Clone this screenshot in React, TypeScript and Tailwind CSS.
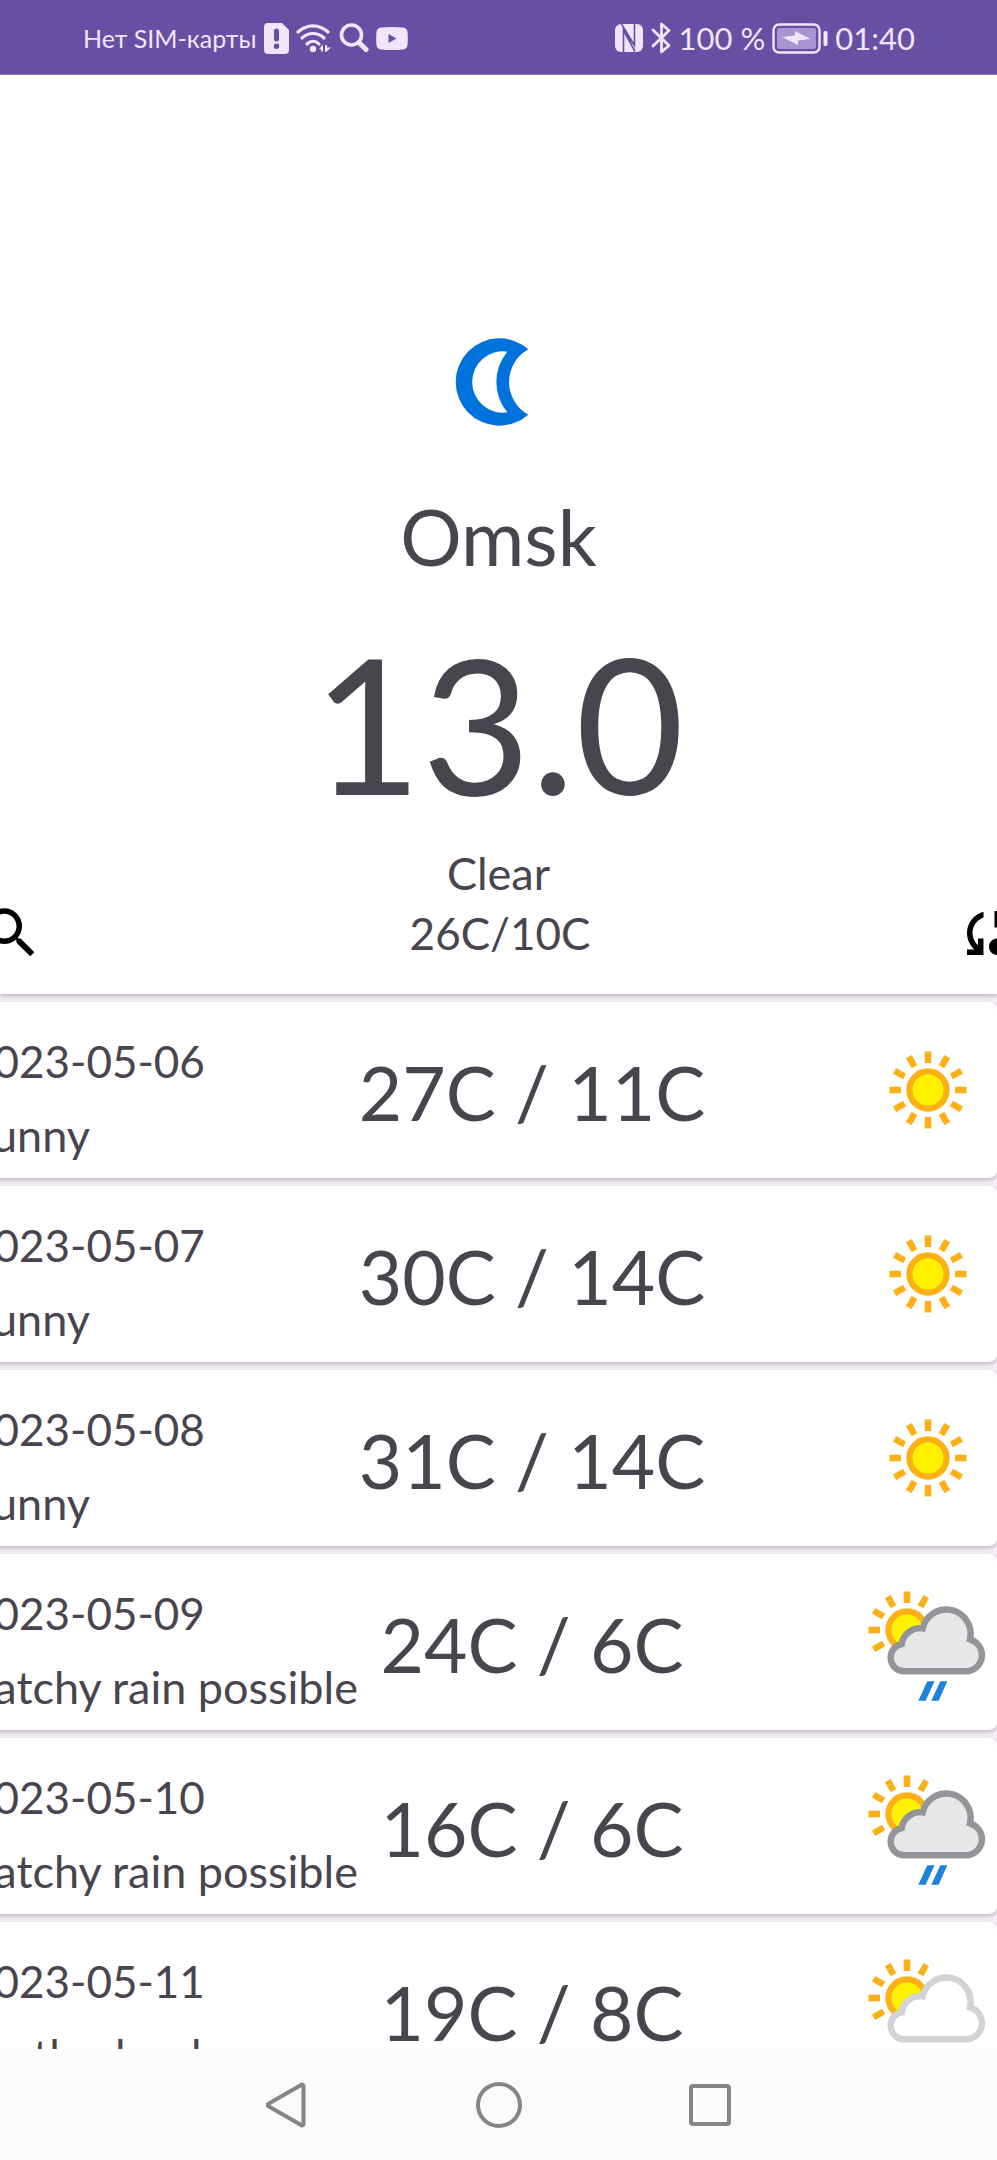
type IconKind = "sunny" | "rain" | "cloudy";

interface Day {
  date: string;
  condition: string;
  temps: string;
  icon: IconKind;
}

const DAYS: Day[] = [
  { date: "2023-05-06", condition: "Sunny", temps: "27C / 11C", icon: "sunny" },
  { date: "2023-05-07", condition: "Sunny", temps: "30C / 14C", icon: "sunny" },
  { date: "2023-05-08", condition: "Sunny", temps: "31C / 14C", icon: "sunny" },
  { date: "2023-05-09", condition: "Patchy rain possible", temps: "24C / 6C", icon: "rain" },
  { date: "2023-05-10", condition: "Patchy rain possible", temps: "16C / 6C", icon: "rain" },
  { date: "2023-05-11", condition: "Partly cloudy", temps: "19C / 8C", icon: "cloudy" },
];

function Sun({ cx, cy, angles }: { cx: number; cy: number; angles: number[] }) {
  return (
    <g>
      {angles.map((a) => (
        <rect key={a} x={cx - 3.3} y={cy - 38.5} width="6.6" height="11.5" fill="#fbb116" transform={`rotate(${a} ${cx} ${cy})`} />
      ))}
      <circle cx={cx} cy={cy} r="18.6" fill="#fff200" stroke="#fbb116" strokeWidth="6.2" />
    </g>
  );
}

function WeatherIcon({ kind }: { kind: IconKind }) {
  if (kind === "sunny") {
    return (
      <svg viewBox="0 0 140 140" className="size-[140px]" role="img" aria-label="Sunny">
        <Sun cx={71} cy={70} angles={[0, 30, 60, 90, 120, 150, 180, 210, 240, 270, 300, 330]} />
      </svg>
    );
  }
  const rain = kind === "rain";
  return (
    <svg viewBox="0 0 140 140" className="size-[140px]" role="img" aria-label={rain ? "Rain" : "Cloudy"}>
      <Sun cx={50} cy={58} angles={[0, 30, 240, 270, 300, 330]} />
      <path
        d="M46.3 99.3A13.8 13.8 0 0 1 44.8 72A18.5 18.5 0 0 1 65.7 56.3A24 24 0 0 1 113 67.3A16.3 16.3 0 0 1 109 99.3Z"
        fill={rain ? "#e6e7e8" : "#ffffff"}
        stroke={rain ? "#939598" : "#d1d3d4"}
        strokeWidth="6.4"
      />
      {rain && <path d="M70.3 109.3h7.2l-8.8 19.4h-7.4zM83.3 109.3h7l-8.6 19.4h-7.4z" fill="#1e82dc" />}
    </svg>
  );
}

function StatusBar() {
  return (
    <header className="flex h-[75px] shrink-0 items-center justify-between border-b border-[#8f80a6] bg-[#674fa3] pt-0.5 pr-[82px] pl-[83px] text-[#efe6fb]">
      <div className="flex items-center gap-[7px]">
        <span className="text-[25px] leading-8 whitespace-nowrap">Нет SIM-карты</span>
        <svg viewBox="0 0 25 31" className="h-[31px] w-[25px]" aria-hidden="true">
          <path fill="currentColor" fillRule="evenodd" d="M4 0h14l7 7v20a4 4 0 0 1-4 4H4a4 4 0 0 1-4-4V4a4 4 0 0 1 4-4zM10 8v8a2.5 2.5 0 0 0 5 0V8a2.5 2.5 0 0 0-5 0zM12.5 20.500a2.700 2.700 0 1 0 0 5.400a2.700 2.700 0 0 0 0-5.400z" />
        </svg>
        <svg viewBox="0 0 36 31" className="h-[31px] w-[36px]" aria-hidden="true">
          <g fill="none" stroke="currentColor" strokeWidth="3.2" strokeLinecap="round">
            <path d="M2 9C11 .8 23 .8 32 9" />
            <path d="M6 15c6.500-6 15.500-6 22 0" />
            <path d="M11 21c3.800-3.600 8.500-3.600 12 0" />
          </g>
          <circle cx="17" cy="26" r="3.200" fill="currentColor" />
          <path fill="currentColor" d="M23 26l4-4.500v7h-2V26zM29 22h2v2.500h4L30 29h-1z" />
        </svg>
        <svg viewBox="0 0 30 30" className="size-[30px]" fill="none" stroke="currentColor" aria-hidden="true">
          <circle cx="12.500" cy="12" r="10" strokeWidth="3.600" />
          <path d="M20 19.500l7 7" strokeWidth="5" strokeLinecap="round" />
        </svg>
        <svg viewBox="0 0 32 23" className="h-[23px] w-[32px]" aria-hidden="true">
          <path fill="currentColor" fillRule="evenodd" d="M5 .6Q16-.6 27 .6q4 .4 4.500 4.500.7 6.400 0 12.800-.5 4.100-4.500 4.500-11 1.200-22 0-4-.4-4.500-4.500-.7-6.400 0-12.800Q1 1 5 .6zM12.500 7v9l8-4.500z" />
        </svg>
      </div>
      <div className="flex items-center gap-[7px]">
        <svg viewBox="0 0 28 28" className="size-[28px]" aria-hidden="true">
          <rect width="28" height="28" rx="6" fill="currentColor" />
          <path d="M8.500 28V6l11 15.500V0M6.500 0l13 21.500M8.500 6.500l11.500 21" fill="none" stroke="#674fa3" strokeWidth="1.600" />
        </svg>
        <svg viewBox="0 0 22 32" className="h-[32px] w-[22px]" fill="none" stroke="currentColor" strokeWidth="2.800" strokeLinejoin="round" strokeLinecap="round" aria-hidden="true">
          <path d="M3 8l16 15.500L11.500 30V2L19 8.500 3 24" />
        </svg>
        <span className="text-[31px] leading-10 whitespace-nowrap">100 %</span>
        <svg viewBox="0 0 56 31" className="h-[31px] w-[56px]" aria-hidden="true">
          <rect x="1.500" y="1.500" width="46" height="28" rx="5.500" fill="none" stroke="currentColor" strokeWidth="2.400" />
          <rect x="5" y="5" width="39" height="21" rx="2.500" fill="#a794d3" />
          <path d="M10 14l13-1.500V8l15.500 8-12.500 1.500V22z" fill="currentColor" />
          <rect x="51.500" y="8" width="4" height="15" rx="1.500" fill="currentColor" />
        </svg>
        <span className="text-[31px] leading-10 whitespace-nowrap">01:40</span>
      </div>
    </header>
  );
}

function CurrentWeather() {
  return (
    <section className="relative z-10 flex shrink-0 flex-col items-center bg-white pt-[259px] pb-7 shadow-[0_2px_4px_rgba(30,20,30,0.25)]">
      <svg viewBox="151 72 288 288" className="size-[96px]" role="img" aria-label="Clear night">
        <path
          fill="#0072db"
          fillRule="evenodd"
          d="M383 118A131 131 0 1 0 383 314A112 112 0 0 1 383 118ZM320 125A92 92 0 1 0 320 307A142 142 0 0 1 320 125Z"
        />
      </svg>
      <h1 className="mt-15 text-[77px] leading-[92px]">Omsk</h1>
      <p className="mt-6 text-[188px] leading-[232px]">13.0</p>
      <p className="mt-2 text-[45px] leading-[54px]">Clear</p>
      <div className="flex items-center justify-between self-stretch">
        <button type="button" aria-label="Search" className="-ml-[22px] text-black">
          <svg viewBox="0 0 24 24" className="size-[66px]" fill="currentColor">
            <path d="M15.500 14h-.79l-.28-.27A6.471 6.471 0 0 0 16 9.500 6.500 6.500 0 1 0 9.500 16c1.610 0 3.090-.59 4.230-1.570l.27.28v.79l5 4.990L20.490 19l-4.990-5zm-6 0C7.010 14 5 11.990 5 9.500S7.010 5 9.500 5 14 7.010 14 9.500 11.990 14 9.500 14z" />
          </svg>
        </button>
        <p className="text-[44px] leading-[60px]">26C/10C</p>
        <button type="button" aria-label="Refresh" className="-mr-[25px] text-black">
          <svg viewBox="0 0 24 24" className="size-[66px]" fill="currentColor">
            <path d="M21.500 14.980c-.02 0-.03 0-.05.01C21.200 13.300 19.760 12 18 12c-1.400 0-2.600.83-3.160 2.020C13.260 14.100 12 15.400 12 17c0 1.660 1.340 3 3 3l6.500-.02c1.380 0 2.500-1.120 2.500-2.500s-1.120-2.500-2.500-2.500zM10 4.260v2.090C7.670 7.180 6 9.390 6 12c0 1.770.78 3.340 2 4.440V14h2v6H4v-2h2.730C5.060 16.540 4 14.400 4 12c0-3.730 2.550-6.850 6-7.740zM20 6h-2.730c1.430 1.260 2.410 3.010 2.660 5h-2.020c-.23-1.360-.93-2.550-1.910-3.440V10h-2V4h6v2z" />
          </svg>
        </button>
      </div>
    </section>
  );
}

function DayCard({ day }: { day: Day }) {
  return (
    <li className="-ml-12 flex h-[176px] shrink-0 items-center rounded-lg bg-white pl-4 shadow-[0_2px_4px_rgba(30,20,30,0.25)]">
      <div className="flex w-0 flex-1 flex-col gap-[14px] pt-4 leading-[60px] whitespace-nowrap">
        <span className="text-[44px]">{day.date}</span>
        <span className="text-[45px]">{day.condition}</span>
      </div>
      <p className="flex w-[340px] justify-center pt-1 text-[75px] leading-[92px] whitespace-nowrap">{day.temps}</p>
      <div className="flex w-[295px] justify-end">
        <WeatherIcon kind={day.icon} />
      </div>
    </li>
  );
}

function NavBar() {
  return (
    <nav className="flex h-[111px] shrink-0 items-center justify-center gap-[163px] bg-[#fbfbfb] text-[#858585]">
      <button type="button" aria-label="Back">
        <svg viewBox="0 0 48 48" className="size-12" fill="none" stroke="currentColor" strokeWidth="4" strokeLinejoin="round">
          <path d="M38 3.500l1.500 1v39l-1.500 1L4 25v-2z" />
        </svg>
      </button>
      <button type="button" aria-label="Home">
        <svg viewBox="0 0 48 48" className="size-12" fill="none" stroke="currentColor" strokeWidth="4">
          <circle cx="24" cy="24" r="21" />
        </svg>
      </button>
      <button type="button" aria-label="Recent apps">
        <svg viewBox="0 0 48 48" className="size-12" fill="none" stroke="currentColor" strokeWidth="4">
          <rect x="5" y="5" width="38" height="38" rx="2" />
        </svg>
      </button>
    </nav>
  );
}

export default function App() {
  return (
    <div className="flex h-screen flex-col overflow-hidden bg-[#f4eff4] font-[Lato,'Noto_Sans',sans-serif] text-[#49454f]">
      <StatusBar />
      <CurrentWeather />
      <ul className="flex min-h-0 flex-1 flex-col gap-2 overflow-hidden pt-2">
        {DAYS.map((day) => (
          <DayCard key={day.date} day={day} />
        ))}
      </ul>
      <NavBar />
    </div>
  );
}
